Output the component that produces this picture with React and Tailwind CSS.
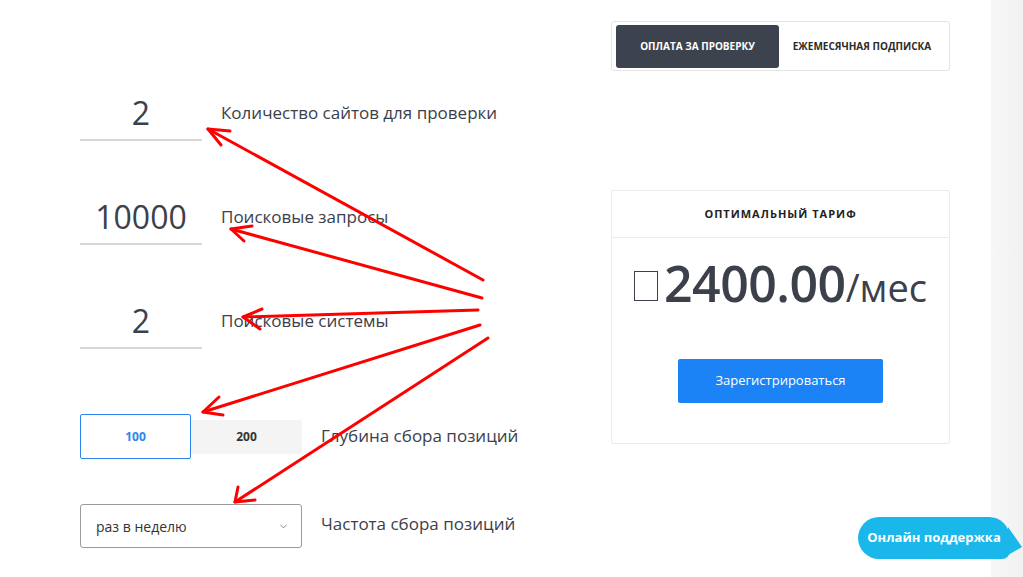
import React, { useState } from "react";
import { ChevronDown } from "lucide-react";

const NumberRow = ({ value, label, className = "" }) => (
  <div className={`flex items-center ${className}`}>
    <div className="w-[122px] h-[53px] border-b-2 border-[#d6d6d6] flex items-center justify-center pb-[2px] text-[32px] text-[#3b404b] leading-none">
      {value}
    </div>
    <span className="ml-[19px] mb-[4px] text-[17px] text-[#3b404b]">{label}</span>
  </div>
);

const Arrows = () => {
  const arrows = [
    { tail: [483, 280], tip: [208, 129], a: [230, 131], b: [221, 145] },
    { tail: [482, 298], tip: [231, 229], a: [252, 226], b: [244, 241] },
    { tail: [478, 310], tip: [243, 317], a: [262, 309], b: [260, 329] },
    { tail: [480, 325], tip: [203, 412], a: [219, 397], b: [223, 415] },
    { tail: [488, 338], tip: [235, 502], a: [238, 487], b: [255, 500] },
  ];
  return (
    <svg className="absolute inset-0 pointer-events-none" width="1023" height="577" viewBox="0 0 1023 577">
      {arrows.map((ar, i) => (
        <g key={i} stroke="#ff0000" strokeWidth="3" strokeLinecap="round" strokeLinejoin="round" fill="none">
          <line x1={ar.tail[0]} y1={ar.tail[1]} x2={ar.tip[0]} y2={ar.tip[1]} />
          <polyline points={`${ar.a[0]},${ar.a[1]} ${ar.tip[0]},${ar.tip[1]} ${ar.b[0]},${ar.b[1]}`} />
        </g>
      ))}
    </svg>
  );
};

export default function App() {
  const [tab, setTab] = useState("check");
  const [depth, setDepth] = useState(100);

  return (
    <div className="relative w-[1023px] h-[577px] overflow-hidden bg-white flex font-['Open_Sans',sans-serif]">
      <div className="flex-1 flex">
        {/* left: settings */}
        <div className="w-[611px] pl-[80px] flex flex-col">
          <NumberRow className="mt-[88px]" value="2" label="Количество сайтов для проверки" />
          <NumberRow className="mt-[51px]" value="10000" label="Поисковые запросы" />
          <NumberRow className="mt-[51px]" value="2" label="Поисковые системы" />

          <div className="mt-[65px] flex items-center">
            <div className="flex items-center">
              <button
                type="button"
                onClick={() => setDepth(100)}
                className={`w-[111px] h-[45px] rounded-[2px] text-[12px] font-bold ${
                  depth === 100 ? "border border-[#2a85f0] bg-white text-[#2a85f0]" : "bg-[#f4f4f4] text-[#333]"
                }`}
              >
                100
              </button>
              <button
                type="button"
                onClick={() => setDepth(200)}
                className={`w-[111px] rounded-[2px] text-[12px] font-bold ${
                  depth === 200 ? "h-[45px] border border-[#2a85f0] bg-white text-[#2a85f0]" : "h-[34px] bg-[#f4f4f4] text-[#333]"
                }`}
              >
                200
              </button>
            </div>
            <span className="ml-[19px] mb-[2px] text-[17px] text-[#3b404b]">Глубина сбора позиций</span>
          </div>

          <div className="mt-[45px] flex items-center">
            <div className="w-[222px] h-[44px] border border-[#9a9a9a] rounded-[3px] flex items-center justify-between pl-[15px] pr-[12px]">
              <span className="text-[14px] text-[#333]">раз в неделю</span>
              <ChevronDown size={11} strokeWidth={1.5} className="text-[#555]" />
            </div>
            <span className="ml-[19px] mb-[4px] text-[17px] text-[#3b404b]">Частота сбора позиций</span>
          </div>
        </div>

        {/* right: tariff */}
        <div className="w-[339px] flex flex-col">
          <div className="mt-[21px] h-[50px] border border-[#e4e4e4] rounded-[3px] flex items-center px-[4px]">
            <button
              type="button"
              onClick={() => setTab("check")}
              className={`w-[163px] h-[43px] rounded-[3px] text-[10px] font-bold ${
                tab === "check" ? "bg-[#3d434e] text-white" : "text-[#2b2b2b]"
              }`}
            >
              ОПЛАТА ЗА ПРОВЕРКУ
            </button>
            <button
              type="button"
              onClick={() => setTab("month")}
              className={`flex-1 h-[43px] rounded-[3px] text-[10px] font-bold ${
                tab === "month" ? "bg-[#3d434e] text-white" : "text-[#2b2b2b]"
              }`}
            >
              ЕЖЕМЕСЯЧНАЯ ПОДПИСКА
            </button>
          </div>

          <div className="mt-[119px] h-[254px] border border-[#ebebeb] rounded-[2px] flex flex-col">
            <div className="h-[47px] border-b border-[#ebebeb] flex items-center justify-center text-[11px] font-bold tracking-[1px] text-[#222]">
              ОПТИМАЛЬНЫЙ ТАРИФ
            </div>
            <div className="mt-[20px] flex items-baseline justify-center text-[#3b404b]">
              <span className="inline-block w-[24px] h-[30px] border border-[#3b404b] mr-[6px] self-center mt-[6px]" />
              <span className="text-[50px] font-semibold leading-none tracking-[-0.5px]">2400.00</span>
              <span className="text-[38px] leading-none">/мес</span>
            </div>
            <div className="mt-[51px] flex justify-center">
              <button
                type="button"
                className="w-[205px] h-[44px] rounded-[2px] bg-[#1c83f6] text-white text-[13px]"
              >
                Зарегистрироваться
              </button>
            </div>
          </div>
        </div>
      </div>

      {/* page edge strip */}
      <div className="w-[32px] h-full bg-gradient-to-r from-[#f7f7f7] to-[#f1f1f1]" />

      <Arrows />

      {/* support bubble */}
      <div className="absolute left-[858px] top-[517px] flex items-end">
        <div className="h-[42px] w-[152px] rounded-[21px] rounded-br-[8px] bg-[#1ab7ea] flex items-center justify-center text-white text-[13px] font-bold">
          Онлайн поддержка
        </div>
        <svg width="14" height="42" viewBox="0 0 14 42" className="-ml-[2px]">
          <path d="M0 10 L14 30 L0 38 Z" fill="#1ab7ea" />
        </svg>
      </div>
    </div>
  );
}
